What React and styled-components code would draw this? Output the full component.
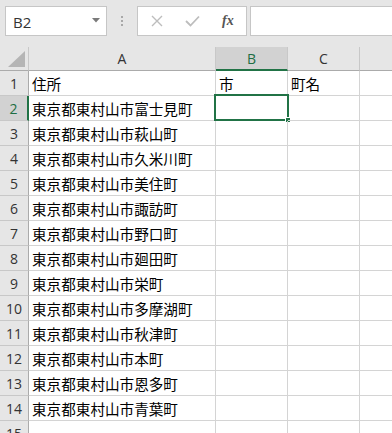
import styled, { createGlobalStyle } from 'styled-components';

const GlobalStyle = createGlobalStyle`
  html, body {
    margin: 0;
    padding: 0;
    background: #e6e6e6;
    overflow: hidden;
  }
  * { box-sizing: border-box; }
`

const rows = [
  ['住所', '市', '町名'],
  ['東京都東村山市富士見町', '', ''],
  ['東京都東村山市萩山町', '', ''],
  ['東京都東村山市久米川町', '', ''],
  ['東京都東村山市美住町', '', ''],
  ['東京都東村山市諏訪町', '', ''],
  ['東京都東村山市野口町', '', ''],
  ['東京都東村山市廻田町', '', ''],
  ['東京都東村山市栄町', '', ''],
  ['東京都東村山市多摩湖町', '', ''],
  ['東京都東村山市秋津町', '', ''],
  ['東京都東村山市本町', '', ''],
  ['東京都東村山市恩多町', '', ''],
  ['東京都東村山市青葉町', '', ''],
  ['', '', ''],
]

const columns = ['A', 'B', 'C', '']

const App = () => {
  return (
    <Page>
      <GlobalStyle />
      <Toolbar>
        <NameBox>
          <span>B2</span>
          <svg width="8" height="5" viewBox="0 0 8 5">
            <path d="M0 0 L8 0 L4 4.5 Z" fill="#7a7a7a" />
          </svg>
        </NameBox>
        <Grip>
          <i /><i /><i />
        </Grip>
        <FormulaButtons>
          <svg width="12" height="12" viewBox="0 0 12 12">
            <path d="M1 1 L11 11 M11 1 L1 11" stroke="#bdbdbd" strokeWidth="1.4" fill="none" />
          </svg>
          <svg width="15" height="12" viewBox="0 0 15 12">
            <path d="M1 6 L5.5 10.5 L14 1.5" stroke="#bdbdbd" strokeWidth="1.8" fill="none" />
          </svg>
          <Fx>fx</Fx>
        </FormulaButtons>
        <FormulaInput />
      </Toolbar>

      <Sheet>
        <Corner>
          <svg width="17" height="16" viewBox="0 0 17 16">
            <path d="M17 0 L17 16 L0 16 Z" fill="#b5b5b5" />
          </svg>
        </Corner>
        {columns.map((c, i) => (
          <ColHeader key={i} $active={c === 'B'}>{c}</ColHeader>
        ))}
        {rows.map((r, ri) => (
          <Row key={ri} >
            <RowHeader $active={ri === 1}>{ri + 1}</RowHeader>
            {r.map((v, ci) => (
              <Cell key={ci}>
                {v}
                {ri === 1 && ci === 1 && (
                  <Selection>
                    <Handle />
                  </Selection>
                )}
              </Cell>
            ))}
            <Cell />
          </Row>
        ))}
      </Sheet>
    </Page>
  )
}

const Page = styled.div`
  width: 392px;
  height: 433px;
  overflow: hidden;
  background: #e6e6e6;
`

const Toolbar = styled.div`
  display: flex;
  align-items: flex-start;
  height: 47px;
  padding: 6px 0 0 5px;
`

const NameBox = styled.div`
  width: 102px;
  height: 30px;
  background: #fff;
  border: 1px solid #c6c6c6;
  display: flex;
  align-items: center;
  justify-content: space-between;
  padding: 1px 6px 0 7px;
  font-family: "Open Sans", "Liberation Sans", sans-serif;
  font-size: 15px;
  color: #333;

  svg { margin-top: -2px; }
`

const Grip = styled.div`
  width: 30px;
  height: 30px;
  display: flex;
  flex-direction: column;
  align-items: center;
  justify-content: center;
  gap: 2px;

  i {
    display: block;
    width: 2px;
    height: 2px;
    background: #a8a8a8;
  }
`

const FormulaButtons = styled.div`
  width: 110px;
  height: 30px;
  background: #fff;
  border: 1px solid #c6c6c6;
  display: flex;
  align-items: center;
  padding: 0 0 0 13px;
  gap: 22px;
`

const Fx = styled.span`
  font-family: "Liberation Serif", serif;
  font-style: italic;
  font-weight: bold;
  font-size: 14px;
  color: #555;
  margin-left: 0px;
`

const FormulaInput = styled.div`
  flex: 1;
  height: 30px;
  margin-left: 3px;
  margin-right: -2px;
  background: #fff;
  border: 1px solid #c6c6c6;
`

const Sheet = styled.div`
  display: grid;
  grid-template-columns: 29px 187px 72px 72px 40px;
  grid-auto-rows: 25px;
  grid-template-rows: 24px;
  background: #fff;
`

const Row = styled.div`
  display: contents;
`

const Corner = styled.div`
  background: #e6e6e6;
  border-right: 1px solid #c8c8c8;
  border-bottom: 1px solid #ababab;
  display: flex;
  align-items: flex-end;
  justify-content: flex-end;
  padding: 0 3px 3px 0;
`

const ColHeader = styled.div`
  background: ${p => (p.$active ? '#d2d2d2' : '#e6e6e6')};
  border-right: 1px solid #c8c8c8;
  border-bottom: ${p => (p.$active ? '2px solid #217346' : '1px solid #ababab')};
  display: flex;
  align-items: center;
  justify-content: center;
  padding-top: ${p => (p.$active ? '1px' : '0')};
  font-family: "Open Sans", "Liberation Sans", sans-serif;
  font-size: 14px;
  color: ${p => (p.$active ? '#1e6e44' : '#333')};
`

const RowHeader = styled.div`
  background: ${p => (p.$active ? '#d2d2d2' : '#e6e6e6')};
  border-right: ${p => (p.$active ? '2px solid #217346' : '1px solid #ababab')};
  border-bottom: 1px solid #c8c8c8;
  display: flex;
  align-items: center;
  justify-content: center;
  font-family: "Open Sans", "Liberation Sans", sans-serif;
  font-size: 14px;
  color: ${p => (p.$active ? '#1e6e44' : '#333')};
`

const Cell = styled.div`
  position: relative;
  border-right: 1px solid #d4d4d4;
  border-bottom: 1px solid #d4d4d4;
  padding: 0 0 0 3px;
  display: flex;
  align-items: center;
  font-family: "Noto Sans CJK JP", sans-serif;
  font-size: 14.6px;
  color: #000;
  white-space: nowrap;
`

const Selection = styled.div`
  position: absolute;
  left: -2px;
  top: -2px;
  right: -2px;
  bottom: -1px;
  border: 2px solid #217346;
`

const Handle = styled.div`
  position: absolute;
  right: -4px;
  bottom: -4px;
  width: 6px;
  height: 6px;
  background: #217346;
  border: 1px solid #fff;
`

export default App
